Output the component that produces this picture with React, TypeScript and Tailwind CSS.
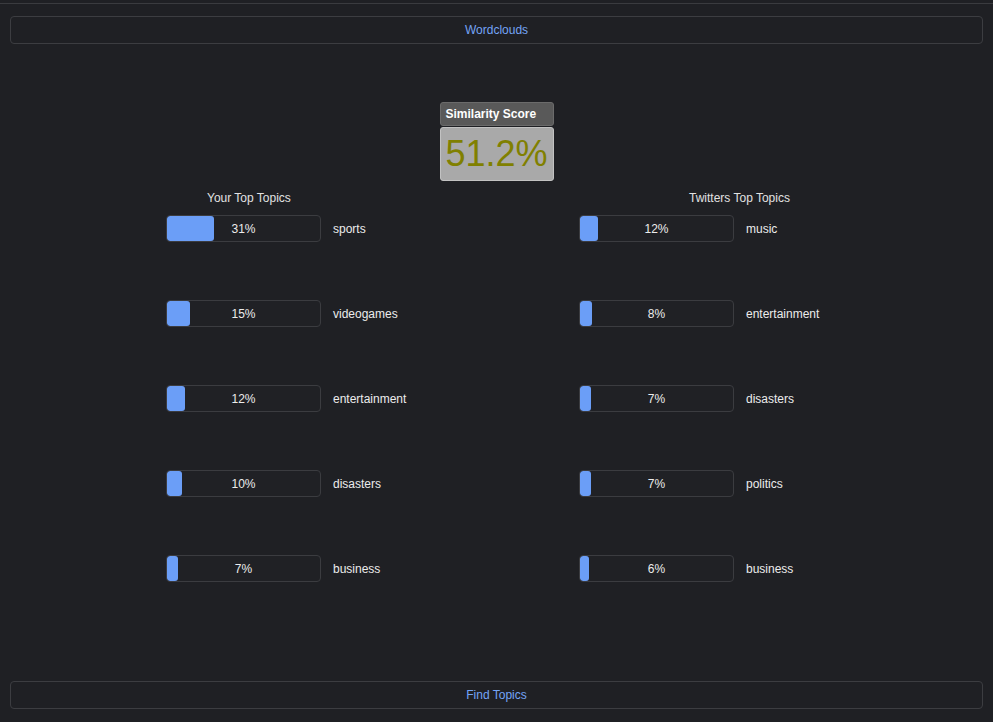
import React from "react";

const yours = [
  { label: "sports", pct: 31 },
  { label: "videogames", pct: 15 },
  { label: "entertainment", pct: 12 },
  { label: "disasters", pct: 10 },
  { label: "business", pct: 7 },
];

const twitters = [
  { label: "music", pct: 12 },
  { label: "entertainment", pct: 8 },
  { label: "disasters", pct: 7 },
  { label: "politics", pct: 7 },
  { label: "business", pct: 6 },
];

function Bar({ label, pct }: { label: string; pct: number }) {
  return (
    <div className="flex items-center h-[27px]">
      <div className="relative w-[155px] h-[27px] rounded-[4px] border border-[#3b3c40] bg-[#202125] overflow-hidden">
        <div
          className="absolute left-0 top-0 bottom-0 bg-[#6b9ef7] rounded-[3px]"
          style={{ width: `${pct}%` }}
        />
        <div className="relative flex h-full items-center justify-center text-[12px] text-[#ececec]">
          {pct}%
        </div>
      </div>
      <div className="ml-[12px] text-[12px] text-[#ececec]">{label}</div>
    </div>
  );
}

export default function App() {
  return (
    <div
      className="w-[993px] h-[722px] bg-[#1f2024] flex flex-col overflow-hidden"
      style={{ fontFamily: '"Liberation Sans", Arial, sans-serif' }}
    >
      <div className="h-[3px]" />
      <div className="h-px bg-[#3a3b3f]" />
      <div className="px-[10px] mt-[12px]">
        <div className="h-[28px] rounded-[4px] border border-[#3c3d41] flex items-center justify-center text-[12px] text-[#74a4f6]">
          Wordclouds
        </div>
      </div>

      <div className="flex-1 flex flex-col">
        <div className="mt-[58px] self-center w-[114px] flex flex-col">
          <div className="h-[24px] rounded-[3px] border border-[#6b6b6b] bg-[#595959] flex items-center pl-[5px] text-[12px] font-bold text-white">
            Similarity Score
          </div>
          <div className="mt-px h-[54px] rounded-[3px] border border-[#c2c2c2] bg-[#a9a9a9] flex items-center justify-center text-[36px] text-[#808000] leading-none">
            51.2%
          </div>
        </div>

        <div className="mt-[9px] flex">
          <div className="ml-[166px] w-[413px] flex flex-col">
            <div className="pl-[41px] h-[17px] text-[12px] text-[#e2e2e2] leading-[17px]">
              Your Top Topics
            </div>
            <div className="mt-[8px] flex flex-col gap-[58px]">
              {yours.map((r) => (
                <Bar key={r.label} label={r.label} pct={r.pct} />
              ))}
            </div>
          </div>
          <div className="flex flex-col">
            <div className="pl-[110px] h-[17px] text-[12px] text-[#e2e2e2] leading-[17px]">
              Twitters Top Topics
            </div>
            <div className="mt-[8px] flex flex-col gap-[58px]">
              {twitters.map((r) => (
                <Bar key={r.label} label={r.label} pct={r.pct} />
              ))}
            </div>
          </div>
        </div>
      </div>

      <div className="px-[10px] mb-[13px]">
        <div className="h-[28px] rounded-[4px] border border-[#3c3d41] flex items-center justify-center text-[12px] text-[#74a4f6]">
          Find Topics
        </div>
      </div>
    </div>
  );
}
